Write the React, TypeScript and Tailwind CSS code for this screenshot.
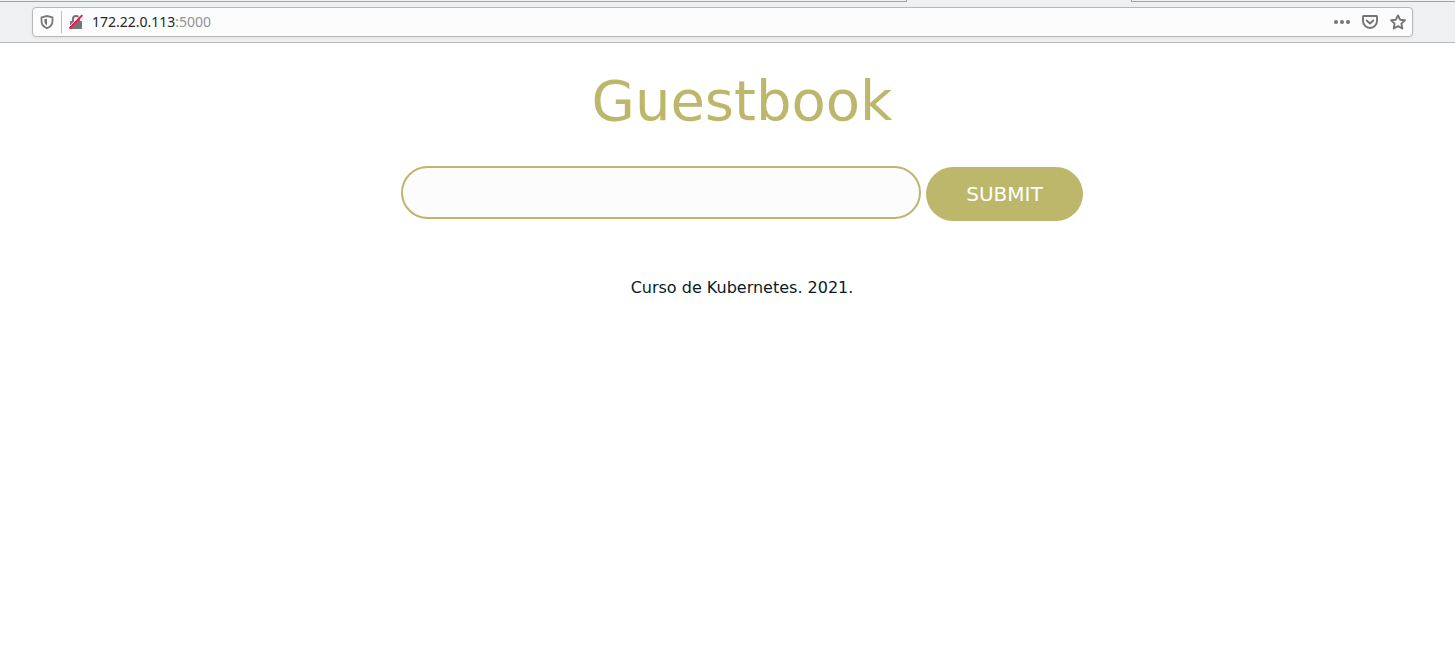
import React from "react";

function ShieldIcon() {
  return (
    <svg className="size-4" viewBox="0 0 16 16" fill="none" aria-hidden="true">
      <path d="M8 2 13.500 3.300V7c0 3.500-2 5.900-5.500 7.200C4.500 12.900 2.500 10.500 2.500 7V3.300Z" stroke="#7a7a7a" strokeWidth="1.800" strokeLinejoin="round" />
      <path d="M8 4.700v6.700C6.200 10.400 5.400 9 5.400 7V5.200Z" fill="#747474" />
    </svg>
  );
}

function InsecureIcon() {
  return (
    <svg className="size-4" viewBox="0 0 16 16" fill="none" aria-hidden="true">
      <path d="M5 8V5a3 3 0 0 1 6 0v3" stroke="#747474" strokeWidth="2" />
      <rect x="2" y="7" width="12" height="8" rx="1" fill="#747474" />
      <path d="M0.500 13.500 13 0.500" stroke="#fcfcfc" strokeWidth="1" />
      <path d="M1.500 14.500 14.300 1.200" stroke="#ff0f4f" strokeWidth="1.900" />
    </svg>
  );
}

function PocketIcon() {
  return (
    <svg className="size-4" viewBox="0 0 16 16" fill="none" stroke="#747474" strokeWidth="1.900" strokeLinecap="round" strokeLinejoin="round" aria-hidden="true">
      <path d="M1.500 2h13a.5.5 0 0 1 .5.500V7A7 7 0 0 1 1 7V2.500a.5.5 0 0 1 .5-.5Z" />
      <path d="m4.700 6.500 3.300 3 3.300-3" />
    </svg>
  );
}

function StarIcon() {
  return (
    <svg className="size-4" viewBox="0 0 16 16" fill="none" stroke="#747474" strokeWidth="1.900" strokeLinejoin="round" aria-hidden="true">
      <path d="m8 1.400 2.100 4.300 4.800.6-3.500 3.300.9 4.900L8 12.100l-4.300 2.400.9-4.900L1.100 6.300l4.800-.6Z" />
    </svg>
  );
}

function DotsIcon() {
  return (
    <svg className="size-4" viewBox="0 0 16 16" fill="#747474" aria-hidden="true">
      <circle cx="2" cy="8" r="2" />
      <circle cx="8" cy="8" r="2" />
      <circle cx="14" cy="8" r="2" />
    </svg>
  );
}

function BrowserBar() {
  return (
    <header className="border-b border-[#b8b9ba] bg-[#eff0f2]">
      <div className="flex h-0.5">
        <div className="flex-[907] border-r border-b border-[#a0a3a5]" />
        <div className="flex-[225]" />
        <div className="flex-[323] border-b border-l border-[#a0a3a5]" />
      </div>
      <div className="pt-[5px] pr-[42px] pb-[5px] pl-8">
        <div className="flex h-[30px] items-center rounded-[4px] border border-[#b8b8b8] bg-[#fcfcfc] px-1.5 shadow-[0_1px_3px_rgba(0,0,0,0.06)]">
          <button type="button" aria-label="Tracking protection"><ShieldIcon /></button>
          <div className="mx-1.5 h-[22px] w-px bg-[#bdbdbd]" />
          <button type="button" aria-label="Connection is not secure"><InsecureIcon /></button>
          <div className="ml-2 flex-1 font-['Noto_Sans',sans-serif] text-sm text-[#232629]">
            172.22.0.113<span className="text-[#929394]">:5000</span>
          </div>
          <div className="flex items-center gap-3">
            <button type="button" aria-label="Page actions"><DotsIcon /></button>
            <button type="button" aria-label="Save to Pocket"><PocketIcon /></button>
            <button type="button" aria-label="Bookmark this page"><StarIcon /></button>
          </div>
        </div>
      </div>
    </header>
  );
}

export default function App() {
  return (
    <div className="min-h-screen bg-white font-['DejaVu_Sans',sans-serif]">
      <BrowserBar />
      <main className="flex flex-col items-center pt-6 pl-[29px] text-[#0b1a26]">
        <h1 className="text-[56px] leading-[68px] text-[#bdb76b]">Guestbook</h1>
        <form className="mt-[31px] flex max-w-full items-start gap-[5px]" onSubmit={(event) => event.preventDefault()}>
          <input
            type="text"
            aria-label="Guestbook entry"
            className="h-[53px] w-[520px] min-w-0 rounded-full border-2 border-[#bdb76b] bg-[#fcfcfc] px-5 text-xl outline-none"
          />
          <button type="submit" className="mt-px h-[54px] rounded-full bg-[#bdb76b] px-10 text-[20px] leading-6 text-white">
            SUBMIT
          </button>
        </form>
        <p className="mt-[55px] text-base">Curso de Kubernetes. 2021.</p>
      </main>
    </div>
  );
}
